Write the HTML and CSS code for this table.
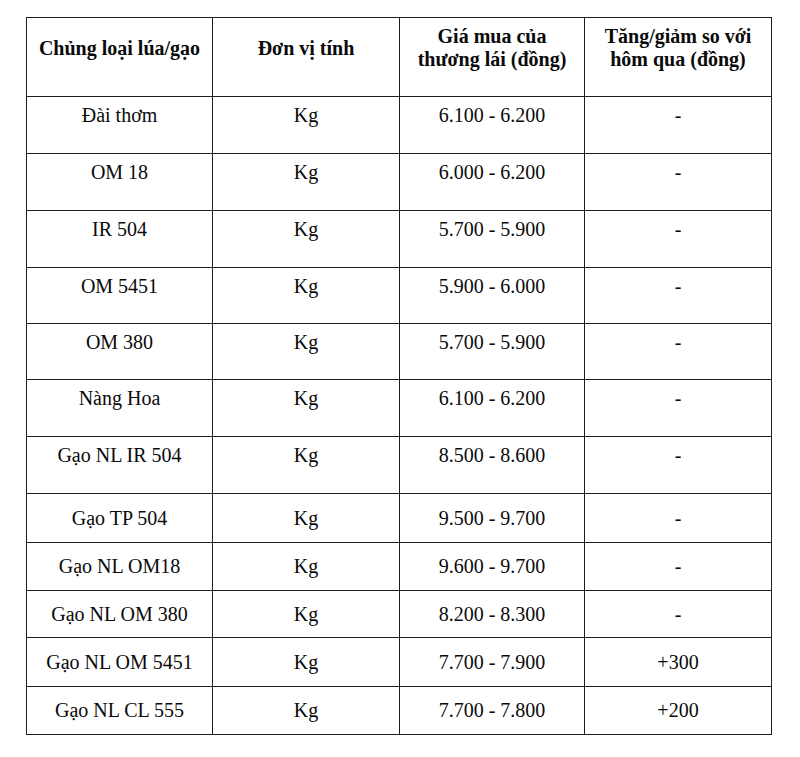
FILE: index.html
```html
<!DOCTYPE html>
<html lang="vi">
<head>
<meta charset="utf-8">
<title>Giá lúa gạo</title>
<link rel="stylesheet" href="styles.css">
</head>
<body>
<main class="page">
<table class="price-table">
  <colgroup>
    <col class="c1"><col class="c2"><col class="c3"><col class="c4">
  </colgroup>
  <thead>
    <tr class="head">
      <th>Chủng loại lúa/gạo</th>
      <th>Đơn vị tính</th>
      <th>Giá mua của<br>thương lái (đồng)</th>
      <th>Tăng/giảm so với<br>hôm qua (đồng)</th>
    </tr>
  </thead>
  <tbody>
    <tr class="tall"><td>Đài thơm</td><td>Kg</td><td>6.100 - 6.200</td><td>-</td></tr>
    <tr class="tall"><td>OM 18</td><td>Kg</td><td>6.000 - 6.200</td><td>-</td></tr>
    <tr class="tall"><td>IR 504</td><td>Kg</td><td>5.700 - 5.900</td><td>-</td></tr>
    <tr class="tall b56"><td>OM 5451</td><td>Kg</td><td>5.900 - 6.000</td><td>-</td></tr>
    <tr class="tall b56"><td>OM 380</td><td>Kg</td><td>5.700 - 5.900</td><td>-</td></tr>
    <tr class="tall"><td>Nàng Hoa</td><td>Kg</td><td>6.100 - 6.200</td><td>-</td></tr>
    <tr class="tall"><td>Gạo NL IR 504</td><td>Kg</td><td>8.500 - 8.600</td><td>-</td></tr>
    <tr class="short b49"><td>Gạo TP 504</td><td>Kg</td><td>9.500 - 9.700</td><td>-</td></tr>
    <tr class="short"><td>Gạo NL OM18</td><td>Kg</td><td>9.600 - 9.700</td><td>-</td></tr>
    <tr class="short b47"><td>Gạo NL OM 380</td><td>Kg</td><td>8.200 - 8.300</td><td>-</td></tr>
    <tr class="short b49"><td>Gạo NL OM 5451</td><td>Kg</td><td>7.700 - 7.900</td><td>+300</td></tr>
    <tr class="short"><td>Gạo NL CL 555</td><td>Kg</td><td>7.700 - 7.800</td><td>+200</td></tr>
  </tbody>
</table>
</main>
</body>
</html>
```

FILE: styles.css
```css
html, body {
  margin: 0;
  padding: 0;
  background: #ffffff;
}

.page {
  padding: 17px 0 0 26px;
}

.price-table {
  border-collapse: collapse;
  table-layout: fixed;
  width: 745px;
  font-family: "Liberation Serif", "Times New Roman", serif;
  font-size: 20px;
  line-height: 23px;
  color: #0a0a0a;
}

.c1 { width: 186px; }
.c2 { width: 187px; }
.c3 { width: 185px; }
.c4 { width: 187px; }

.price-table th,
.price-table td {
  border: 1px solid #1e1e1e;
  text-align: center;
  padding: 0 4px;
}

.price-table th {
  font-weight: bold;
  vertical-align: middle;
  padding-top: 7px;
  padding-bottom: 25px;
}

.head { height: 78px; }

.tall { height: 57px; }
.tall td {
  vertical-align: top;
  padding-top: 7px;
}
.tall.b56 { height: 56px; }

.short { height: 48px; }
.short td { vertical-align: middle; }
.short.b49 { height: 49px; }
.short.b47 { height: 47px; }
```
